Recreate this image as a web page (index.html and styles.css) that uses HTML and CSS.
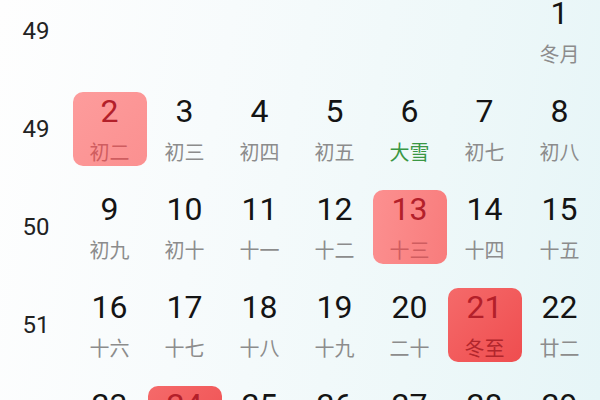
FILE: index.html
```html
<!DOCTYPE html>
<html lang="zh">
<head>
<meta charset="utf-8">
<link rel="stylesheet" href="styles.css">
</head>
<body>
<div class="page">
  <div class="cal">
    <div class="wk">49</div>
    <div class="day"></div><div class="day"></div><div class="day"></div><div class="day"></div><div class="day"></div><div class="day"></div>
    <div class="day"><div class="box"><span class="num">1</span><span class="lunar">冬月</span></div></div>

    <div class="wk">49</div>
    <div class="day"><div class="box hl-light"><span class="num">2</span><span class="lunar">初二</span></div></div>
    <div class="day"><div class="box"><span class="num">3</span><span class="lunar">初三</span></div></div>
    <div class="day"><div class="box"><span class="num">4</span><span class="lunar">初四</span></div></div>
    <div class="day"><div class="box"><span class="num">5</span><span class="lunar">初五</span></div></div>
    <div class="day"><div class="box"><span class="num">6</span><span class="lunar term">大雪</span></div></div>
    <div class="day"><div class="box"><span class="num">7</span><span class="lunar">初七</span></div></div>
    <div class="day"><div class="box"><span class="num">8</span><span class="lunar">初八</span></div></div>

    <div class="wk">50</div>
    <div class="day"><div class="box"><span class="num">9</span><span class="lunar">初九</span></div></div>
    <div class="day"><div class="box"><span class="num">10</span><span class="lunar">初十</span></div></div>
    <div class="day"><div class="box"><span class="num">11</span><span class="lunar">十一</span></div></div>
    <div class="day"><div class="box"><span class="num">12</span><span class="lunar">十二</span></div></div>
    <div class="day"><div class="box hl-mid"><span class="num">13</span><span class="lunar">十三</span></div></div>
    <div class="day"><div class="box"><span class="num">14</span><span class="lunar">十四</span></div></div>
    <div class="day"><div class="box"><span class="num">15</span><span class="lunar">十五</span></div></div>

    <div class="wk">51</div>
    <div class="day"><div class="box"><span class="num">16</span><span class="lunar">十六</span></div></div>
    <div class="day"><div class="box"><span class="num">17</span><span class="lunar">十七</span></div></div>
    <div class="day"><div class="box"><span class="num">18</span><span class="lunar">十八</span></div></div>
    <div class="day"><div class="box"><span class="num">19</span><span class="lunar">十九</span></div></div>
    <div class="day"><div class="box"><span class="num">20</span><span class="lunar">二十</span></div></div>
    <div class="day"><div class="box hl-strong"><span class="num">21</span><span class="lunar">冬至</span></div></div>
    <div class="day"><div class="box"><span class="num">22</span><span class="lunar">廿二</span></div></div>

    <div class="wk">52</div>
    <div class="day"><div class="box"><span class="num">23</span><span class="lunar">廿三</span></div></div>
    <div class="day"><div class="box hl-strong"><span class="num">24</span><span class="lunar">廿四</span></div></div>
    <div class="day"><div class="box"><span class="num">25</span><span class="lunar">廿五</span></div></div>
    <div class="day"><div class="box"><span class="num">26</span><span class="lunar">廿六</span></div></div>
    <div class="day"><div class="box"><span class="num">27</span><span class="lunar">廿七</span></div></div>
    <div class="day"><div class="box"><span class="num">28</span><span class="lunar">廿八</span></div></div>
    <div class="day"><div class="box"><span class="num">29</span><span class="lunar">廿九</span></div></div>
  </div>
</div>
</body>
</html>
```

FILE: styles.css
```css
html, body {
  margin: 0;
  padding: 0;
}
body {
  width: 600px;
  height: 400px;
  overflow: hidden;
  font-family: Roboto, "Noto Sans CJK SC", sans-serif;
}
.page {
  width: 600px;
  height: 400px;
  overflow: hidden;
  background: linear-gradient(100deg, #fefefe 0%, #f7fbfc 35%, #eef8f9 70%, #e6f5f7 100%);
}
.cal {
  display: grid;
  grid-template-columns: 72px repeat(7, 75px);
  grid-auto-rows: 98px;
  margin-top: -18px;
}
.wk {
  display: flex;
  align-items: center;
  justify-content: center;
  font-size: 24px;
  color: #222;
}
.day {
  display: flex;
  align-items: center;
  justify-content: center;
}
.box {
  width: 74px;
  height: 74px;
  box-sizing: border-box;
  border-radius: 10px;
  display: flex;
  flex-direction: column;
  align-items: center;
  padding-top: 1px;
  gap: 10px;
}
.num {
  font-size: 32px;
  line-height: 36px;
  color: #141414;
}
.lunar {
  font-family: "Noto Sans CJK SC", sans-serif;
  font-size: 20px;
  line-height: 26px;
  color: #8c8c8c;
}
.lunar.term {
  color: #3a9744;
}
.hl-light {
  background: linear-gradient(135deg, #fd9c9c, #fb9090);
}
.hl-mid {
  background: linear-gradient(100deg, #fc9090, #f87c7c);
}
.hl-strong {
  background: linear-gradient(135deg, #f56a6a, #ef4d4f);
}
.hl-light .num, .hl-mid .num, .hl-strong .num {
  color: #b3202a;
}
.hl-light .lunar, .hl-mid .lunar {
  color: #cf5d60;
}
.hl-strong .lunar {
  color: #b1262c;
}
```
